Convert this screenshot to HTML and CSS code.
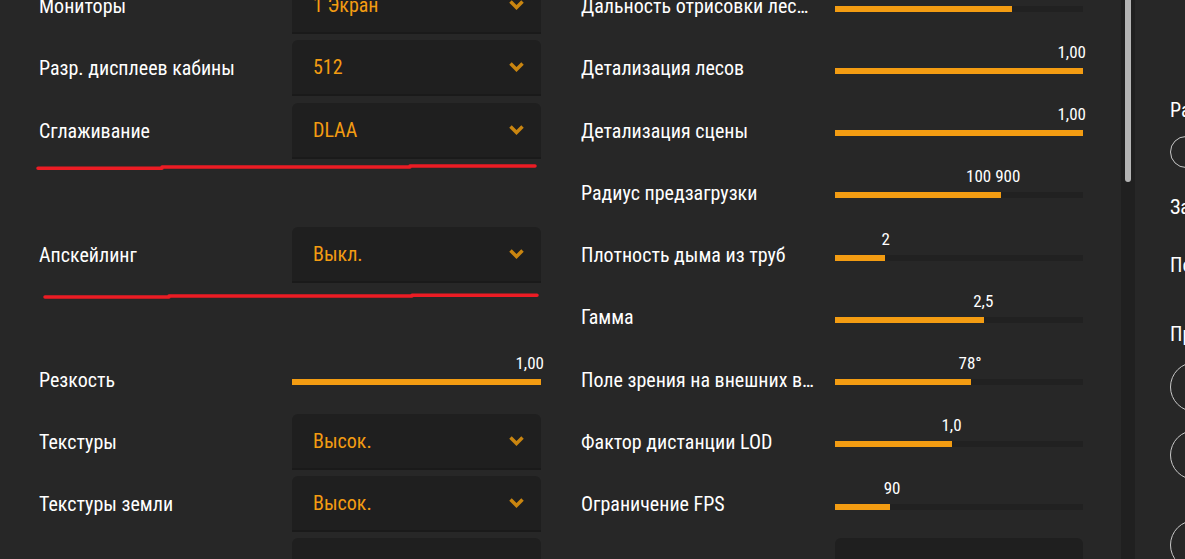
FILE: index.html
```html
<!DOCTYPE html>
<html>
<head>
  <meta name="viewport" content="width=device-width, initial-scale=1.0">
  <title>Графика</title>
  <link rel="stylesheet" href="styles.css">
</head>
<body>
  <div class="screen">
    <div class="settings">

      <div class="col left">
        <div class="row">
          <div class="label">Мониторы</div>
          <div class="select"><span>1 Экран</span><svg class="chev" viewBox="0 0 15 10"><path d="M1.5 1.5 L7.5 7.5 L13.5 1.5"/></svg></div>
        </div>
        <div class="row">
          <div class="label">Разр. дисплеев кабины</div>
          <div class="select"><span>512</span><svg class="chev" viewBox="0 0 15 10"><path d="M1.5 1.5 L7.5 7.5 L13.5 1.5"/></svg></div>
        </div>
        <div class="row">
          <div class="label">Сглаживание</div>
          <div class="select"><span>DLAA</span><svg class="chev" viewBox="0 0 15 10"><path d="M1.5 1.5 L7.5 7.5 L13.5 1.5"/></svg></div>
        </div>
        <div class="row"></div>
        <div class="row">
          <div class="label">Апскейлинг</div>
          <div class="select"><span>Выкл.</span><svg class="chev" viewBox="0 0 15 10"><path d="M1.5 1.5 L7.5 7.5 L13.5 1.5"/></svg></div>
        </div>
        <div class="row"></div>
        <div class="row">
          <div class="label">Резкость</div>
          <div class="slider"><div class="fill" style="width: 100%"></div><span class="val max">1,00</span></div>
        </div>
        <div class="row">
          <div class="label">Текстуры</div>
          <div class="select"><span>Высок.</span><svg class="chev" viewBox="0 0 15 10"><path d="M1.5 1.5 L7.5 7.5 L13.5 1.5"/></svg></div>
        </div>
        <div class="row">
          <div class="label">Текстуры земли</div>
          <div class="select"><span>Высок.</span><svg class="chev" viewBox="0 0 15 10"><path d="M1.5 1.5 L7.5 7.5 L13.5 1.5"/></svg></div>
        </div>
        <div class="row last">
          <div class="label"></div>
          <div class="select"></div>
        </div>
      </div>

      <div class="col right">
        <div class="row">
          <div class="label">Дальность отрисовки лесов</div>
          <div class="slider"><div class="fill" style="width: 71.5%"></div><span class="val" style="left: 71.5%">5,00</span></div>
        </div>
        <div class="row">
          <div class="label">Детализация лесов</div>
          <div class="slider"><div class="fill" style="width: 100%"></div><span class="val max">1,00</span></div>
        </div>
        <div class="row">
          <div class="label">Детализация сцены</div>
          <div class="slider"><div class="fill" style="width: 100%"></div><span class="val max">1,00</span></div>
        </div>
        <div class="row">
          <div class="label">Радиус предзагрузки</div>
          <div class="slider"><div class="fill" style="width: 67%"></div><span class="val" style="left: 63.8%">100 900</span></div>
        </div>
        <div class="row">
          <div class="label">Плотность дыма из труб</div>
          <div class="slider"><div class="fill" style="width: 20.2%"></div><span class="val" style="left: 20.4%">2</span></div>
        </div>
        <div class="row">
          <div class="label">Гамма</div>
          <div class="slider"><div class="fill" style="width: 60%"></div><span class="val" style="left: 59.8%">2,5</span></div>
        </div>
        <div class="row">
          <div class="label">Поле зрения на внешних видах</div>
          <div class="slider"><div class="fill" style="width: 55%"></div><span class="val" style="left: 54.5%">78°</span></div>
        </div>
        <div class="row">
          <div class="label">Фактор дистанции LOD</div>
          <div class="slider"><div class="fill" style="width: 47.2%"></div><span class="val" style="left: 47%">1,0</span></div>
        </div>
        <div class="row">
          <div class="label">Ограничение FPS</div>
          <div class="slider"><div class="fill" style="width: 22%"></div><span class="val" style="left: 23%">90</span></div>
        </div>
        <div class="row last">
          <div class="label">Качество шрифтов</div>
          <div class="select"><span>Высок.</span><svg class="chev" viewBox="0 0 15 10"><path d="M1.5 1.5 L7.5 7.5 L13.5 1.5"/></svg></div>
        </div>
      </div>

    </div>

    <div class="scrollbar"><div class="thumb"></div></div>

    <div class="side">
      <div class="side-text t1">Разрешение</div>
      <div class="ring small"></div>
      <div class="side-text t2">Задержка</div>
      <div class="side-text t3">Погода</div>
      <div class="side-text t4">Предпросмотр</div>
      <div class="ring r1"></div>
      <div class="ring r2"></div>
      <div class="ring r3"></div>
    </div>

    <!-- red pen marks drawn over the screenshot -->
    <svg class="marks" width="1185" height="559">
      <path d="M38 168.3 H162 M162 167 H410 M410 166 H535"/>
      <path d="M45 297 H169 M169 296 H412 M412 295.3 H537"/>
    </svg>
  </div>
</body>
</html>
```

FILE: styles.css
```css
* {
  box-sizing: border-box;
}

html, body {
  margin: 0;
  overflow: hidden;
}

body {
  font-family: "Roboto Condensed", "Liberation Sans Narrow", Roboto, sans-serif;
  background-color: #272727;
  color: #ffffff;
}

.screen {
  position: relative;
  display: flex;
  height: 559px;
  overflow: hidden;
}

.settings {
  flex: 0 0 1121px;
  display: grid;
  grid-template-columns: 502px 502px;
  column-gap: 40px;
  align-content: start;
  padding-left: 39px;
  margin-top: -25px;
}

.row {
  display: grid;
  height: 62.25px;
  align-items: center;
}

.left .row {
  grid-template-columns: 253px 249px;
}

.right .row {
  grid-template-columns: 254px 248px;
}

.label {
  font-size: 20px;
  white-space: nowrap;
  overflow: hidden;
  text-overflow: ellipsis;
  padding-right: 20px;
}

/* bottom row sits just under the fold */
.last .label {
  padding-top: 9px;
}

.last .select {
  padding-top: 9px;
}

.select {
  height: 56px;
  display: flex;
  align-items: center;
  justify-content: space-between;
  padding: 0 17px 0 21px;
  background-color: #1f1f1f;
  border-radius: 6px 6px 0 0;
  border-bottom: 2px solid #1a1a1a;
  color: #f39c12;
  font-size: 20px;
}

.chev {
  width: 15px;
  height: 10px;
  fill: none;
  stroke: #c98510;
  stroke-width: 3.5;
}

.slider {
  position: relative;
  height: 6px;
  margin-top: 5px;
  background-color: #212121;
}

.fill {
  height: 100%;
  background-color: #f39c12;
}

.val {
  position: absolute;
  bottom: 13px;
  transform: translateX(-50%);
  font-size: 17px;
  line-height: 18px;
  white-space: nowrap;
}

.val.max {
  right: -3px;
  transform: none;
}

.scrollbar {
  flex: 0 0 14px;
  background-color: #202020;
  padding-left: 4px;
}

.thumb {
  width: 6px;
  height: 182px;
  background-color: #b4b4b4;
  border-radius: 0 0 3px 3px;
}

.side {
  flex: 0 0 300px;
  display: flex;
  flex-direction: column;
  align-items: flex-start;
  padding: 98px 0 0 35px;
}

.side-text {
  font-size: 20px;
  line-height: 24px;
  white-space: nowrap;
}

.ring {
  flex-shrink: 0;
  width: 50px;
  height: 50px;
  border: 1.5px solid #c8c8c8;
  border-radius: 50%;
}

.ring.small {
  width: 32px;
  height: 32px;
  margin-top: 14px;
}

.t2 { margin-top: 27px; }
.t3 { margin-top: 34px; }
.t4 { margin-top: 45px; }
.r1 { margin-top: 16px; }
.r2 { margin-top: 18px; }
.r3 { margin-top: 40px; }

.marks {
  position: absolute;
  top: 0;
  left: 0;
  pointer-events: none;
}

.marks path {
  fill: none;
  stroke: #ec1c24;
  stroke-width: 3.5;
  stroke-linecap: round;
}
```
